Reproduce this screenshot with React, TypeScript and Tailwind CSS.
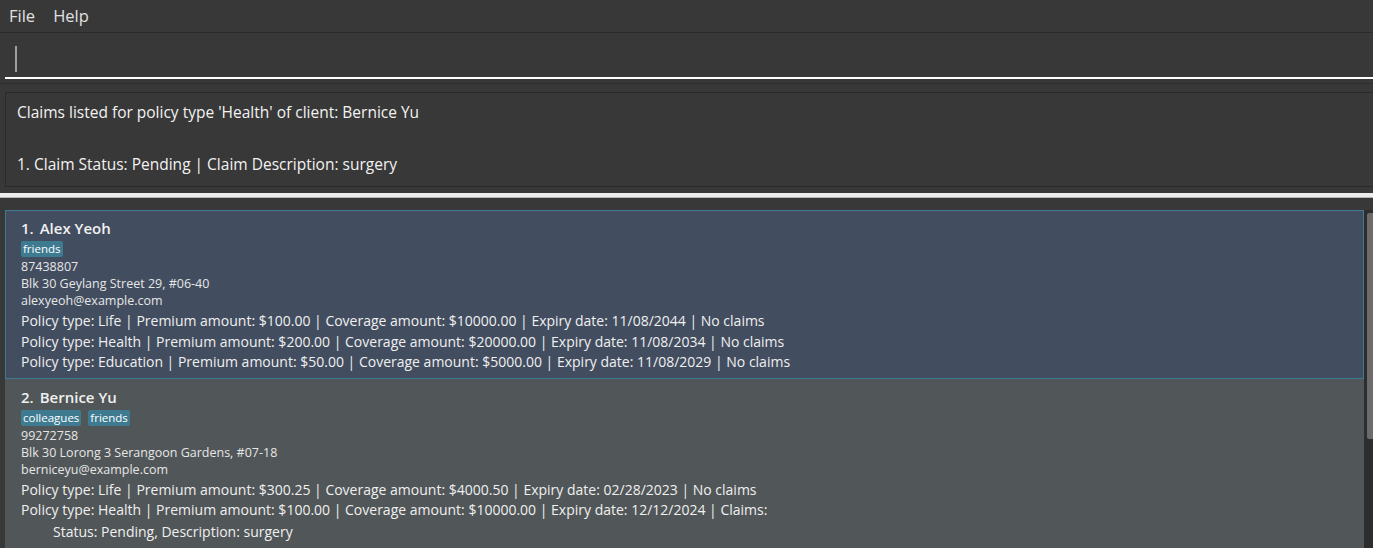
import React from "react";

type Person = {
  index: number;
  name: string;
  tags: string[];
  phone: string;
  address: string;
  email: string;
  policies: string[];
  claims?: string[];
  selected?: boolean;
};

const people: Person[] = [
  {
    index: 1,
    name: "Alex Yeoh",
    tags: ["friends"],
    phone: "87438807",
    address: "Blk 30 Geylang Street 29, #06-40",
    email: "alexyeoh@example.com",
    policies: [
      "Policy type: Life | Premium amount: $100.00 | Coverage amount: $10000.00 | Expiry date: 11/08/2044 | No claims",
      "Policy type: Health | Premium amount: $200.00 | Coverage amount: $20000.00 | Expiry date: 11/08/2034 | No claims",
      "Policy type: Education | Premium amount: $50.00 | Coverage amount: $5000.00 | Expiry date: 11/08/2029 | No claims",
    ],
    selected: true,
  },
  {
    index: 2,
    name: "Bernice Yu",
    tags: ["colleagues", "friends"],
    phone: "99272758",
    address: "Blk 30 Lorong 3 Serangoon Gardens, #07-18",
    email: "berniceyu@example.com",
    policies: [
      "Policy type: Life | Premium amount: $300.25 | Coverage amount: $4000.50 | Expiry date: 02/28/2023 | No claims",
      "Policy type: Health | Premium amount: $100.00 | Coverage amount: $10000.00 | Expiry date: 12/12/2024 | Claims:",
    ],
    claims: ["Status: Pending, Description: surgery"],
  },
];

const PersonCard = ({ p }: { p: Person }) => (
  <div
    className={
      p.selected
        ? "border border-[#3e7b91] bg-[#424d5f] px-[15px] pt-[6px] pb-[5px]"
        : "border border-transparent bg-[#515658] px-[15px] pt-[6px] pb-[5px]"
    }
  >
    <div className="text-[15px] leading-[22px] font-semibold text-[#f0f0f0]">
      {p.index}.<span className="ml-[6px]">{p.name}</span>
    </div>
    <div className="h-[19px] pt-[2px] flex gap-[7px]">
      {p.tags.map((t) => (
        <span
          key={t}
          className="h-[16px] bg-[#3e7b91] text-white text-[11.5px] leading-[16px] px-[2px] rounded-[2px]"
        >
          {t}
        </span>
      ))}
    </div>
    <div className="text-[12.5px] leading-[17px] text-[#e6e6e6]">{p.phone}</div>
    <div className="text-[12.5px] leading-[17px] text-[#e6e6e6]">{p.address}</div>
    <div className="text-[12.5px] leading-[17px] text-[#e6e6e6]">{p.email}</div>
    <div className="mt-[2px]">
      {p.policies.map((line) => (
        <div key={line} className="text-[14px] leading-[20.5px] text-[#f0f0f0]">
          {line}
        </div>
      ))}
      {p.claims?.map((c) => (
        <div key={c} className="pl-[32px] text-[14px] leading-[21px] text-[#f0f0f0]">
          {c}
        </div>
      ))}
    </div>
  </div>
);

export default function App() {
  return (
    <div className="w-[1373px] h-[548px] overflow-hidden bg-[#383838] font-['Open_Sans','Noto_Sans',sans-serif] text-white flex flex-col">
      {/* menu bar */}
      <div className="h-[33px] shrink-0 border-b border-[#2a2a2a] flex items-center gap-[18px] px-[9px] text-[16.5px] text-[#e0e0e0]">
        <span>File</span>
        <span>Help</span>
      </div>

      {/* command box */}
      <div className="h-[51px] shrink-0 border-b border-[#2c2c2c] pl-[5px] pt-[13px]">
        <div className="h-[33px] border-b-2 border-white flex items-start pl-[10px]">
          <div className="w-[2px] h-[26px] bg-[#a0a0a0]" />
        </div>
      </div>

      {/* result display */}
      <div className="shrink-0 pl-[5px] pt-[8px] pb-[6px]">
        <div className="h-[95px] border border-r-0 border-[#2a2a2a] px-[11px] pt-[6px] text-[15.5px] leading-[26px] text-[#f2f2f2]">
          <div>Claims listed for policy type 'Health' of client: Bernice Yu</div>
          <div>&nbsp;</div>
          <div>1. Claim Status: Pending | Claim Description: surgery</div>
        </div>
      </div>

      {/* splitter */}
      <div className="h-[5px] shrink-0 bg-[#ececec] border-b border-[#b5b5b5]" />

      {/* list */}
      <div className="flex-1 flex pt-[12px] pl-[5px]">
        <div className="flex-1 flex flex-col">
          {people.map((p) => (
            <PersonCard key={p.index} p={p} />
          ))}
        </div>
        <div className="w-[9px] bg-[#2d2d2d] flex justify-end">
          <div className="w-[6px] h-[226px] mt-[3px] bg-[#6b6b6b] rounded-l-[2px]" />
        </div>
      </div>
    </div>
  );
}
